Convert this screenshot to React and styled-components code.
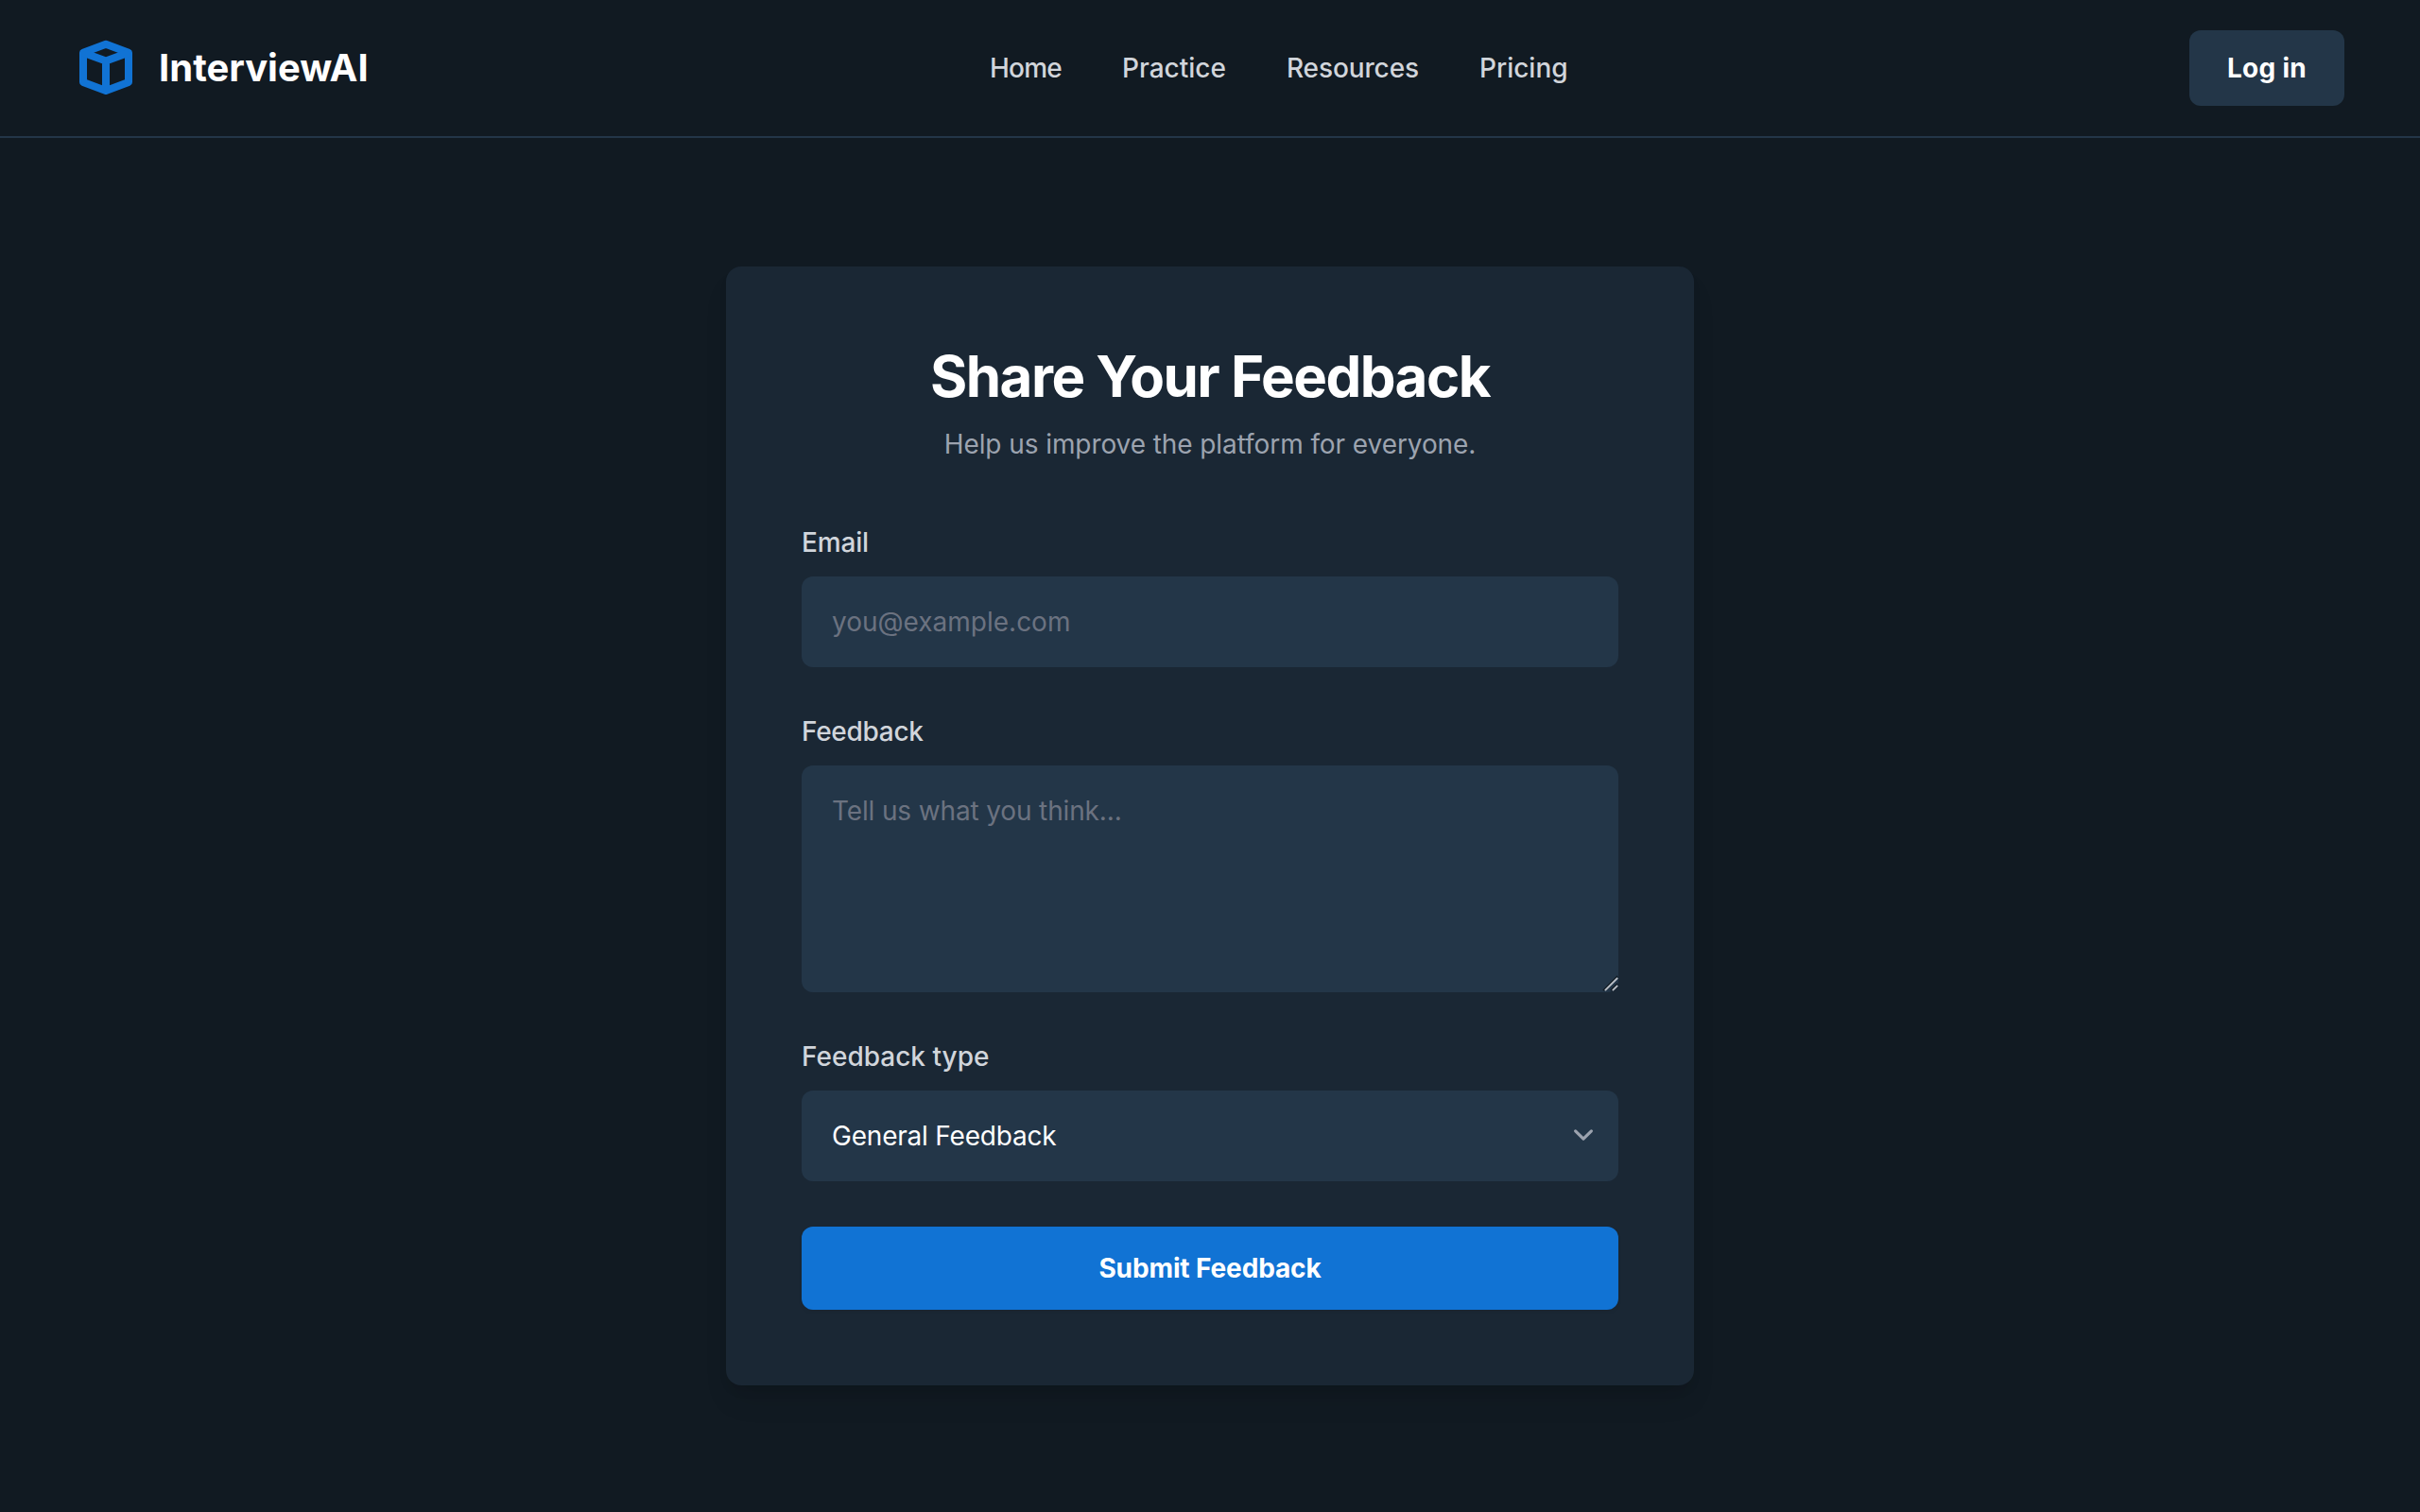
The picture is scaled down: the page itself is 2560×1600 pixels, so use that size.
import React from 'react';
import styled, { createGlobalStyle } from 'styled-components';

const color = {
  page: '#111a22',
  card: '#1a2734',
  field: '#233648',
  primary: '#1173d4',
  label: '#d1d5db',
  muted: '#9ca3af',
  placeholder: '#6b7280',
};

const GlobalStyle = createGlobalStyle`
  *, *::before, *::after { box-sizing: border-box; }
  body {
    margin: 0;
    background: ${color.page};
    color: #fff;
    font-family: Inter, "Noto Sans", sans-serif;
    font-size: 28px;
    line-height: 40px;
  }
  h1, h2, p { margin: 0; }
  input, textarea, select, button { font: inherit; }
`;

const Page = styled.div`
  display: flex;
  flex-direction: column;
  min-height: 1600px;
`;

const Header = styled.header`
  display: flex;
  align-items: center;
  justify-content: space-between;
  padding: 32px 80px;
  border-bottom: 2px solid ${color.field};
`;

const Brand = styled.div`
  display: flex;
  align-items: center;
  gap: 24px;
`;

const Logo = styled.svg`
  width: 64px;
  height: 64px;
  color: ${color.primary};
`;

const BrandName = styled.h2`
  font-size: 40px;
  font-weight: 700;
  line-height: 56px;
`;

const Nav = styled.nav`
  display: flex;
  align-items: center;
  gap: 64px;
`;

const NavLink = styled.a`
  color: ${color.label};
  font-weight: 500;
  letter-spacing: ${(p) => p.$tracking || 0}px;
  text-decoration: none;
`;

const LoginButton = styled.button`
  height: 80px;
  padding: 0 40px;
  border: 0;
  border-radius: 12px;
  background: ${color.field};
  color: #fff;
  font-weight: 700;
  letter-spacing: 0.275px;
`;

const Main = styled.main`
  display: flex;
  flex: 1;
  justify-content: center;
  align-items: flex-start;
  padding: 136px 32px 0;
`;

const Card = styled.section`
  width: 1024px;
  padding: 80px;
  border-radius: 16px;
  background: ${color.card};
  box-shadow: 0 20px 30px -6px rgba(0, 0, 0, 0.1), 0 8px 12px -4px rgba(0, 0, 0, 0.1);
`;

const CardHeader = styled.div`
  display: flex;
  flex-direction: column;
  gap: 16px;
  margin-bottom: 64px;
  text-align: center;
`;

const Title = styled.h1`
  font-size: 60px;
  font-weight: 700;
  line-height: 72px;
  letter-spacing: -1.5px;
`;

const Subtitle = styled.p`
  color: ${color.muted};
  letter-spacing: -0.08px;
`;

const Form = styled.form`
  display: flex;
  flex-direction: column;
  gap: 48px;
`;

const Field = styled.div`
  display: flex;
  flex-direction: column;
  gap: 16px;
`;

const Label = styled.label`
  color: ${color.label};
  font-weight: 500;
  letter-spacing: ${(p) => p.$tracking || 0}px;
`;

const Control = styled.input`
  display: block;
  width: 100%;
  height: ${(p) => p.$height || 96}px;
  padding: 28px 32px;
  border: 0;
  border-radius: 12px;
  outline: 0;
  appearance: none;
  resize: none;
  background: ${color.field};
  color: #fff;
  letter-spacing: ${(p) => p.$tracking || 0}px;
  &::placeholder { color: ${color.placeholder}; opacity: 1; }
`;

const ControlWrap = styled.div`
  position: relative;
`;

const Chevron = styled.svg`
  position: absolute;
  top: 26px;
  right: 16px;
  width: 42px;
  height: 42px;
  color: ${color.muted};
  pointer-events: none;
`;

const Grip = styled.svg`
  position: absolute;
  right: 0;
  bottom: 0;
  width: 18px;
  height: 18px;
  pointer-events: none;
`;

const SubmitButton = styled.button`
  height: 88px;
  border: 0;
  border-radius: 12px;
  background: ${color.primary};
  color: #fff;
  font-weight: 700;
  letter-spacing: -0.12px;
  box-shadow: 0 2px 4px rgba(0, 0, 0, 0.05);
`;

const links = [
  { text: 'Home', tracking: -0.77 },
  { text: 'Practice' },
  { text: 'Resources', tracking: -0.11 },
  { text: 'Pricing' },
];

export default function App() {
  return (
    <>
      <GlobalStyle />
      <Page>
        <Header>
          <Brand>
            <Logo viewBox="0 0 64 64" fill="none" stroke="currentColor" strokeWidth="8" strokeLinejoin="round">
              <path d="M32 6.7 56 15.7V47.1L32 56.1 8 47.1V15.7Z" />
              <path d="M8 15.7 32 24.6 56 15.7M32 24.6V56" />
            </Logo>
            <BrandName>InterviewAI</BrandName>
          </Brand>
          <Nav>
            {links.map(({ text, tracking }) => (
              <NavLink key={text} href="#" $tracking={tracking}>{text}</NavLink>
            ))}
          </Nav>
          <LoginButton type="button">Log in</LoginButton>
        </Header>
        <Main>
          <Card>
            <CardHeader>
              <Title>Share Your Feedback</Title>
              <Subtitle>Help us improve the platform for everyone.</Subtitle>
            </CardHeader>
            <Form>
              <Field>
                <Label htmlFor="email" $tracking={-0.15}>Email</Label>
                <Control id="email" type="email" placeholder="you@example.com" />
              </Field>
              <Field>
                <Label htmlFor="feedback" $tracking={-0.3}>Feedback</Label>
                <ControlWrap>
                  <Control as="textarea" id="feedback" $height={240} $tracking={-0.14} placeholder="Tell us what you think..." />
                  <Grip viewBox="0 0 18 18" fill="none" strokeLinecap="square">
                    <path d="M2.5 15.5l14-14M10.5 15.5l6-6" stroke="#111a22" strokeWidth="1.6" />
                    <path d="M4.5 15.5l12-12M12.5 15.5l4-4" stroke="#b9bec5" strokeWidth="1.8" />
                  </Grip>
                </ControlWrap>
              </Field>
              <Field>
                <Label htmlFor="type">Feedback type</Label>
                <ControlWrap>
                  <Control as="select" id="type" defaultValue="general" $tracking={-0.21}>
                    <option value="general">General Feedback</option>
                  </Control>
                  <Chevron viewBox="0 0 20 20" fill="none" stroke="currentColor" strokeWidth="1.5" strokeLinecap="round" strokeLinejoin="round">
                    <path d="M6 8l4 4 4-4" />
                  </Chevron>
                </ControlWrap>
              </Field>
              <SubmitButton type="button">Submit Feedback</SubmitButton>
            </Form>
          </Card>
        </Main>
      </Page>
    </>
  );
}
